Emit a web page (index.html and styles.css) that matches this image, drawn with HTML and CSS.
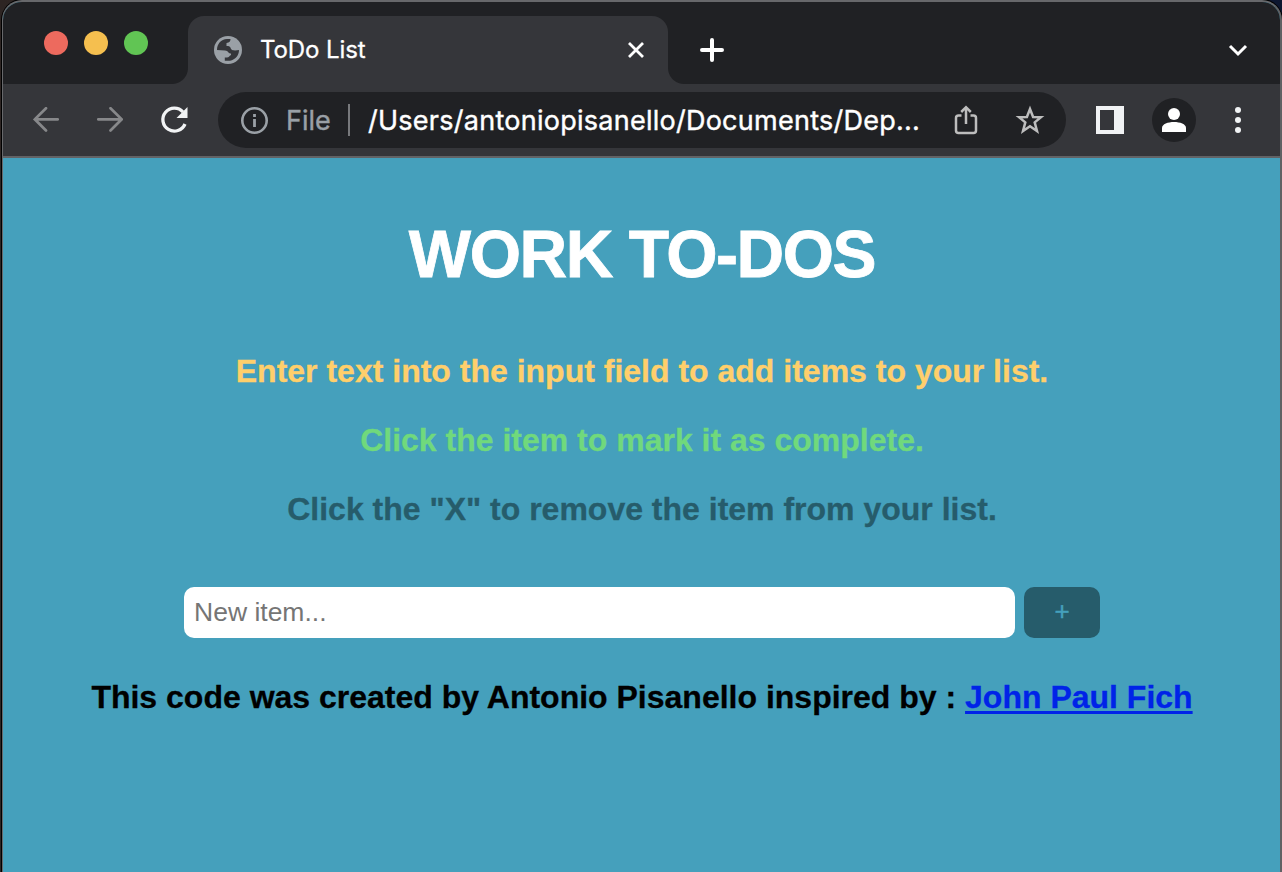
FILE: index.html
```html
<!DOCTYPE html>
<html lang="en">
<head>
<meta charset="utf-8">
<title>ToDo List</title>
<link rel="stylesheet" href="styles.css">
</head>
<body>
<div class="window">
  <header class="tabstrip">
    <div class="lights"><i class="light red"></i><i class="light yellow"></i><i class="light green"></i></div>
    <div class="tab">
      <svg class="globe" width="28" height="28" viewBox="0 0 28 28"><circle cx="14" cy="14" r="14" fill="#9aa0a6"/><path d="M3 14C3 8 7 3.500 13 3.100H16.500C16.500 5.500 15.500 6.800 12.500 7V10C15 10 16.500 10.500 17 13C18 14.500 19.500 14 21 14.500L25 14C25 19.500 21.500 23.500 16 24.800H10.800V21.500H13C15 21.500 15 20 17 19V17.500C14 17.500 14.500 14.800 11 14.500Z" fill="#35363a"/></svg>
      <span class="tab-title">ToDo List</span>
      <svg class="close" width="16" height="16" viewBox="0 0 16 16"><path d="M1 1L15 15M15 1L1 15" stroke="#fff" stroke-width="2.800"/></svg>
    </div>
    <svg class="new-tab" width="24" height="24" viewBox="0 0 24 24"><path d="M12 2V22M2 12H22" stroke="#fff" stroke-width="4" stroke-linecap="round"/></svg>
    <svg class="chevron" width="20" height="14" viewBox="0 0 20 14"><path d="M2 3L10 11L18 3" fill="none" stroke="#fff" stroke-width="3"/></svg>
  </header>
  <nav class="toolbar">
    <svg class="back" width="26" height="26" viewBox="0 0 26 26"><path d="M24.700 12.300H2M13 1.200L1.800 12.300L13 23.500" fill="none" stroke="#87888a" stroke-width="2.700" stroke-linecap="round"/></svg>
    <svg class="forward" width="26" height="26" viewBox="0 0 26 26"><path d="M1.300 12.300H24M13.500 1.200L24.700 12.300L13.500 23.500" fill="none" stroke="#87888a" stroke-width="2.700" stroke-linecap="round"/></svg>
    <svg class="reload" width="28" height="28" viewBox="0 0 28 28"><path d="M23 6A11.500 11.500 0 1 0 25 18" fill="none" stroke="#f1f3f4" stroke-width="3.300"/><path d="M27.500 1V12H16.500Z" fill="#f1f3f4"/></svg>
    <div class="omnibox">
      <svg class="info" width="28" height="28" viewBox="0 0 28 28"><circle cx="13.500" cy="14.500" r="12.200" fill="none" stroke="#9aa0a6" stroke-width="2.600"/><path d="M13.500 13V21M13.500 8V11" stroke="#9aa0a6" stroke-width="2.800"/></svg>
      <span class="scheme">File</span><i class="rule"></i>
      <span class="path">/Users/antoniopisanello/Documents/Dep...</span>
      <svg class="share" width="24" height="30" viewBox="0 0 24 30"><path d="M7.500 10.500H4.500Q2 10.500 2 13V25.500Q2 28 4.500 28H19.500Q22 28 22 25.500V13Q22 10.500 19.500 10.500H16.500M12 19V2.500M7.200 7L12 2.200L16.800 7" fill="none" stroke="#bdbdbd" stroke-width="2.500"/></svg>
      <svg class="star" width="30" height="30" viewBox="0 0 30 30"><path d="M15 4L18.100 12L26 12.200L19.700 17.400L22 26L15 21.300L8 26L10.300 17.400L4 12.200L11.900 12Z" fill="none" stroke="#bdbdbd" stroke-width="2.500"/></svg>
    </div>
    <svg class="panel" width="28" height="28" viewBox="0 0 28 28"><path fill="#f1f3f4" fill-rule="evenodd" d="M0 0H28V28H0ZM4 4V24H18V4Z"/></svg>
    <svg class="avatar" width="44" height="44" viewBox="0 0 44 44"><circle cx="22" cy="22" r="22" fill="#202124"/><circle cx="22" cy="16" r="6" fill="#fff"/><path d="M10 34V30C10 26 16 24 22 24S34 26 34 30V34Z" fill="#fff"/></svg>
    <svg class="menu" width="6" height="26" viewBox="0 0 6 26"><g fill="#f1f3f4"><circle cx="3" cy="3" r="3"/><circle cx="3" cy="13" r="3"/><circle cx="3" cy="23" r="3"/></g></svg>
  </nav>
  <main class="page">
    <h1 class="title">WORK TO-DOS</h1>
    <p class="line enter">Enter text into the input field to add items to your list.</p>
    <p class="line click">Click the item to mark it as complete.</p>
    <p class="line remove">Click the "X" to remove the item from your list.</p>
    <form class="entry"><input class="field" type="text" placeholder="New item..."><button class="add" type="button">+</button></form>
    <p class="line credit">This code was created by Antonio Pisanello inspired by : <a class="link" href="#">John Paul Fich</a></p>
  </main>
</div>
</body>
</html>
```
FILE: styles.css
```css
* { box-sizing: border-box; }
body { margin: 0; height: 872px; overflow: hidden; background: linear-gradient(90deg, #2d2523 0, #343434 40%, #0d1730 98%); }
.window { margin-left: 2px; width: 1280px; height: 900px; border: 2px solid #67686b; border-right-color: #606164; border-left-width: 1px; border-radius: 20px 20px 0 0; overflow: hidden; background: #45a0bc; box-shadow: 0 0 0 1px #000; }
.tabstrip { height: 82px; background: #202124; display: flex; font-family: Inter, sans-serif; }
.lights { display: flex; gap: 16px; padding: 29px 0 0 41px; width: 185px; }
.light { width: 24px; height: 24px; border-radius: 50%; }
.red { background: #ed6a5e; }
.yellow { background: #f5bf4f; }
.green { background: #61c554; }
.tab { position: relative; width: 480px; height: 68px; margin-top: 14px; border-radius: 16px 16px 0 0; background: #35363a; display: flex; align-items: center; padding: 0 24px 0 26px; color: #fff; }
.tab::before, .tab::after { content: ""; position: absolute; bottom: 0; width: 16px; height: 16px; }
.tab::before { left: -16px; background: radial-gradient(circle at 0 0, transparent 15.5px, #35363a 16.5px); }
.tab::after { right: -16px; background: radial-gradient(circle at 100% 0, transparent 15.5px, #35363a 16.5px); }
.tab-title { margin-left: 18px; padding-bottom: 2px; font-size: 24px; letter-spacing: -0.1px; flex: 1; -webkit-text-stroke: 0.3px #fff; }
.new-tab { margin: 36px 0 0 32px; }
.chevron { margin: 41px 32px 0 auto; }
.toolbar { height: 74px; background: #35363a; border-bottom: 2px solid #626366; display: flex; align-items: center; padding-left: 30px; font-family: Inter, sans-serif; font-size: 27px; }
.forward { margin-left: 38px; }
.reload { margin-left: 37px; }
.omnibox { width: 848px; height: 56px; margin-left: 30px; border-radius: 28px; background: #202124; display: flex; align-items: center; padding-left: 23px; }
.scheme { color: #9aa0a6; margin-left: 17px; width: 45px; -webkit-text-stroke: 0.4px #9aa0a6; }
.rule { width: 2px; height: 32px; background: #77797c; margin-left: 17px; }
.path { color: #fff; margin-left: 18px; width: 551px; white-space: nowrap; letter-spacing: 0.26px; -webkit-text-stroke: 0.4px #fff; }
.share { margin-left: 35px; }
.star { margin-left: 37px; }
.panel { margin-left: 30px; }
.avatar { margin-left: 28px; }
.menu { margin-left: 39px; }
.page { text-align: center; font-family: "Liberation Sans", Arial, sans-serif; font-weight: 700; padding: 58px 0 0 1px; }
.title { margin: 0; font-size: 66px; line-height: 76px; color: #fff; letter-spacing: -1.5px; -webkit-text-stroke: 0.8px #fff; }
.line { margin: 0; font-size: 32px; line-height: 37px; white-space: nowrap; -webkit-text-stroke: 0.3px currentColor; }
.enter { color: #ffcf6b; margin-top: 61px; }
.click { color: #70d97c; margin-top: 32px; }
.remove { color: #265c6b; margin-top: 32px; }
.entry { display: flex; gap: 9px; margin: 59px 0 0 180px; }
.field { width: 831px; height: 51px; border: 0; border-radius: 10px; padding: 0 10px; background: #fff; font: 26.500px "Liberation Sans", Arial, sans-serif; }
.field::placeholder { color: #757575; }
.add { width: 76px; height: 51px; border: 0; border-radius: 10px; background: #265c6b; color: #45a0bc; font: 26px "Liberation Sans", Arial, sans-serif; padding: 0 0 2px; -webkit-text-stroke: 0.4px #45a0bc; }
.credit { color: #000; margin-top: 41px; }
.link { color: #0023e8; text-decoration-thickness: 3px; text-underline-offset: 3px; text-decoration-skip-ink: none; }
```
